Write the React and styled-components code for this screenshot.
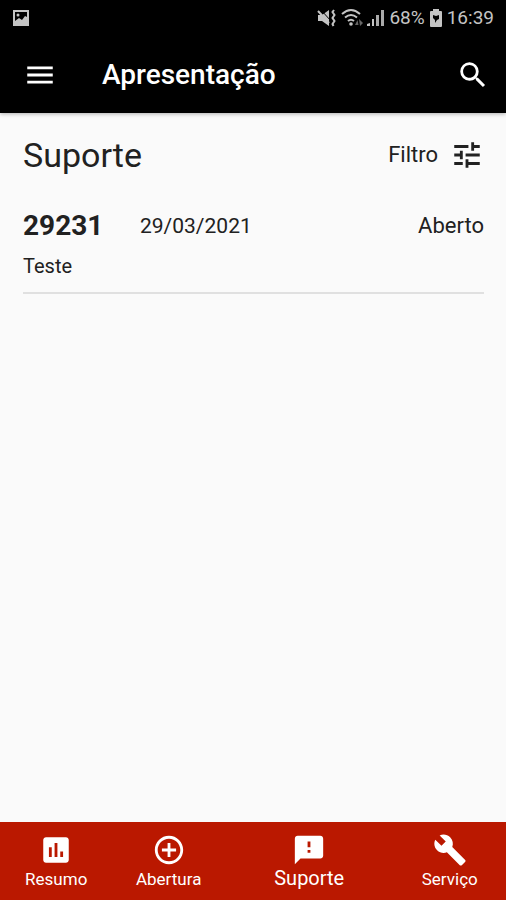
import React, { useState } from "react";
import styled, { createGlobalStyle } from "styled-components";
import {
  MdAddCircleOutline,
  MdAssessment,
  MdBuild,
  MdFeedback,
  MdMenu,
  MdSearch,
  MdTune,
} from "react-icons/md";

const GlobalStyle = createGlobalStyle`
  * {
    box-sizing: border-box;
  }

  body {
    margin: 0;
    background: #fafafa;
    color: #212121;
    font-family: Roboto, "Liberation Sans", sans-serif;
  }

  button {
    margin: 0;
    padding: 0;
    border: 0;
    background: none;
    color: inherit;
    font: inherit;
    cursor: pointer;
  }
`;

const Screen = styled.div`
  display: flex;
  flex-direction: column;
  min-height: 100vh;
`;

const Header = styled.header`
  background: #000;
  color: #fff;
  box-shadow: 0 1px 4px rgba(0, 0, 0, 0.3);
`;

const StatusBar = styled.div`
  display: flex;
  align-items: center;
  justify-content: space-between;
  height: 36px;
  padding: 0 12px;
  color: #c4c4c4;
  font-size: 19px;
  line-height: 24px;
`;

const StatusGroup = styled.div`
  display: flex;
  align-items: center;
  gap: 4px;

  svg {
    display: block;
  }
`;

const AppBar = styled.div`
  display: flex;
  align-items: center;
  height: 77px;
  padding: 0 16px 0 23px;
`;

const IconButton = styled.button`
  display: flex;

  svg {
    width: 34px;
    height: 34px;
  }
`;

const AppTitle = styled.h1`
  flex: 1;
  margin: 0;
  padding-left: 45px;
  font-size: 28px;
  font-weight: 500;
  line-height: 36px;
`;

const Content = styled.main`
  flex: 1;
  padding: 20px 22px 0 23px;
`;

const SectionHead = styled.div`
  display: flex;
  align-items: center;
  justify-content: space-between;
`;

const SectionTitle = styled.h2`
  margin: 0;
  font-size: 34px;
  font-weight: 400;
  line-height: 44px;
`;

const FilterButton = styled.button`
  display: flex;
  align-items: center;
  gap: 12px;
  font-size: 22px;
  line-height: 28px;

  svg {
    width: 34px;
    height: 34px;
  }
`;

const TicketList = styled.ul`
  margin: 29px 0 0;
  padding: 0;
  list-style: none;
`;

const TicketItem = styled.li`
  padding-bottom: 12px;
  border-bottom: 2px solid #e0e0e0;
`;

const TicketRow = styled.div`
  display: flex;
  align-items: center;
`;

const TicketNumber = styled.strong`
  width: 117px;
  font-size: 28px;
  font-weight: 700;
  line-height: 40px;
`;

const TicketDate = styled.time`
  flex: 1;
  font-size: 21px;
  line-height: 28px;
`;

const TicketStatus = styled.span`
  font-size: 22px;
  line-height: 28px;
`;

const TicketText = styled.p`
  margin: 6px 0 0;
  font-size: 20px;
  line-height: 28px;
`;

const BottomNav = styled.nav`
  display: flex;
  height: 78px;
  background: #ba1800;
  color: #fff;
`;

const NavButton = styled.button`
  display: flex;
  flex: ${({ $active }) => ($active ? 3 : 2)} 1 0;
  flex-direction: column;
  align-items: center;
  padding-top: 11px;
  font-size: ${({ $active }) => ($active ? 20 : 17)}px;
  line-height: ${({ $active }) => ($active ? 22 : 24)}px;

  svg {
    width: 34px;
    height: 34px;
  }
`;

const PictureIcon = () => (
  <svg width="18" height="18" viewBox="0 0 18 18" aria-hidden="true">
    <path
      fill="currentColor"
      fillRule="evenodd"
      d="M1 1h16v16H1zM3 3v9l4-3 3 2 3-4 2 1V3z"
    />
    <circle cx="6" cy="6" r="1.500" fill="currentColor" />
  </svg>
);

const MuteIcon = () => (
  <svg width="20" height="20" viewBox="0 0 20 20" aria-hidden="true">
    <path fill="currentColor" d="M1 7h4l7-5v16l-7-5H1z" />
    <path fill="none" stroke="#000" strokeWidth="1" d="M4 2l10 11" />
    <path
      fill="none"
      stroke="currentColor"
      strokeWidth="2"
      d="M1 3l11 12M17 2l-1.500 2 2 3-2 3 2 3-2 3 1 2"
    />
  </svg>
);

const WifiIcon = () => (
  <svg width="22" height="20" viewBox="0 0 22 20" aria-hidden="true">
    <g fill="none" stroke="currentColor" strokeWidth="2">
      <path d="M1 6q9-8 18 0" />
      <path d="M4 9.500q6-5 12 0" />
      <path d="M7 13q3-2.500 6 0" />
    </g>
    <circle cx="10" cy="16" r="1.800" fill="currentColor" />
    <path fill="#666" d="M14 17l2.500-5 1 5zM18 11l4 4-3 3z" />
  </svg>
);

const SignalIcon = () => (
  <svg width="18" height="18" viewBox="0 0 18 18" aria-hidden="true">
    <path fill="currentColor" d="M0 17v-2l3-1v3zM5 10h2v7H5z" />
    <path fill="#aaa" d="M9 6h3v11H9zM14 1h3v16h-3z" />
  </svg>
);

const BatteryIcon = () => (
  <svg width="14" height="20" viewBox="0 0 14 20" aria-hidden="true">
    <path
      fill="currentColor"
      d="M4 1h6v2h2q1 0 1 1v14q0 1-1 1H2q-1 0-1-1V4q0-1 1-1h2z"
    />
    <path fill="#000" d="M4 7l3 1 3-1v4l-2 1-2 3v-3l-2-2z" />
  </svg>
);

const tickets = [
  {
    number: "29231",
    date: "29/03/2021",
    dateTime: "2021-03-29",
    status: "Aberto",
    text: "Teste",
  },
];

const tabs = [
  { label: "Resumo", Icon: MdAssessment },
  { label: "Abertura", Icon: MdAddCircleOutline },
  { label: "Suporte", Icon: MdFeedback },
  { label: "Serviço", Icon: MdBuild },
];

const App = () => {
  const [activeTab, setActiveTab] = useState("Suporte");

  return (
    <>
      <GlobalStyle />
      <Screen>
        <Header>
          <StatusBar>
            <PictureIcon />
            <StatusGroup>
              <MuteIcon />
              <WifiIcon />
              <SignalIcon />
              <span>68%</span>
              <BatteryIcon />
              <span>16:39</span>
            </StatusGroup>
          </StatusBar>
          <AppBar>
            <IconButton type="button" aria-label="Menu">
              <MdMenu />
            </IconButton>
            <AppTitle>Apresentação</AppTitle>
            <IconButton type="button" aria-label="Pesquisar">
              <MdSearch />
            </IconButton>
          </AppBar>
        </Header>
        <Content>
          <SectionHead>
            <SectionTitle>Suporte</SectionTitle>
            <FilterButton type="button">
              Filtro
              <MdTune />
            </FilterButton>
          </SectionHead>
          <TicketList>
            {tickets.map((ticket) => (
              <TicketItem key={ticket.number}>
                <TicketRow>
                  <TicketNumber>{ticket.number}</TicketNumber>
                  <TicketDate dateTime={ticket.dateTime}>
                    {ticket.date}
                  </TicketDate>
                  <TicketStatus>{ticket.status}</TicketStatus>
                </TicketRow>
                <TicketText>{ticket.text}</TicketText>
              </TicketItem>
            ))}
          </TicketList>
        </Content>
        <BottomNav>
          {tabs.map(({ label, Icon }) => (
            <NavButton
              key={label}
              type="button"
              $active={label === activeTab}
              aria-current={label === activeTab ? "page" : undefined}
              onClick={() => setActiveTab(label)}
            >
              <Icon />
              {label}
            </NavButton>
          ))}
        </BottomNav>
      </Screen>
    </>
  );
};

export default App;
